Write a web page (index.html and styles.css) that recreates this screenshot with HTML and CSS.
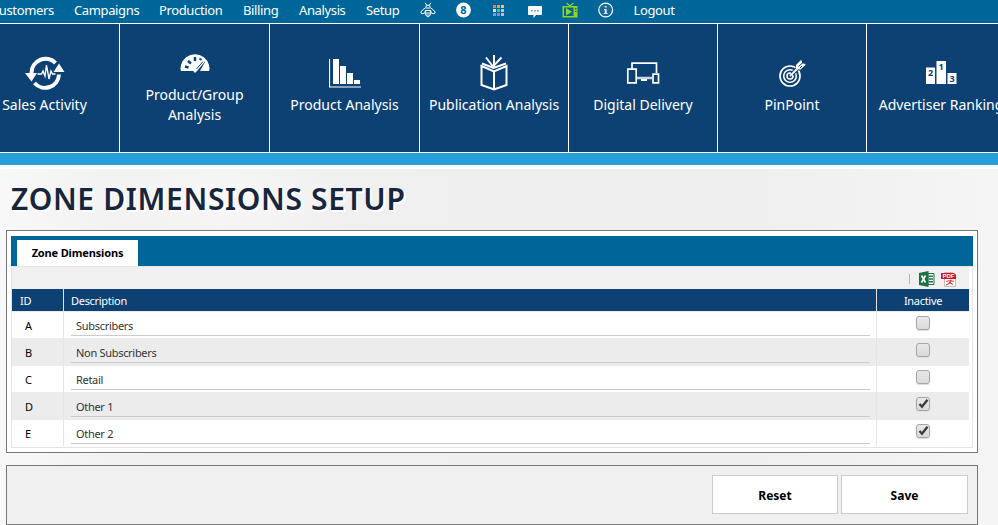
FILE: index.html
```html
<!DOCTYPE html>
<html lang="en">
<head>
<meta charset="utf-8">
<title>Zone Dimensions Setup</title>
<link rel="stylesheet" href="styles.css">
</head>
<body>
<nav class="menu">
  <a class="m-customers">Customers</a><a class="m-campaigns">Campaigns</a><a class="m-production">Production</a><a class="m-billing">Billing</a><a class="m-analysis">Analysis</a><a class="m-setup">Setup</a>
  <span class="micon"><svg width="16" height="16" viewBox="0 0 16 16" fill="none" stroke="#fff" stroke-width="1"><path d="M5 .8l1.800 2.400M11 .8L9.200 3.200M6 5V4q2-2 4 0v1M6 5.500Q3 7 .8 10q0 2 2 1.700 2 0 3.200-2.700M10 5.500q3 1.500 5.200 4.500 0 2-2 1.700-2 0-3.200-2.700M6 6h4M5.500 8.500h5M5 11h6M6 13h4M5.500 8q-1.500 5 2.500 7 4-2 2.500-7"/></svg></span>
  <span class="micon"><svg width="16" height="16" viewBox="0 0 16 16"><circle cx="7.500" cy="8" r="7.400" fill="#fff"/><text x="7.500" y="12" class="eight">8</text></svg></span>
  <span class="micon"><svg width="16" height="16" viewBox="0 0 16 16"><path fill="#f17b68" d="M2 3h3v3H2z"/><path fill="#f59a50" d="M6 3h3v3H6z"/><path fill="#f3c66a" d="M10 3h3v3h-3z"/><path fill="#c9e8df" d="M2 7h3v3H2z"/><path fill="#3ecb7b" d="M6 7h3v3H6z"/><path fill="#8ed7ef" d="M10 7h3v3h-3z"/><path fill="#6aa0dd" d="M2 11h3v3H2z"/><path fill="#b374cb" d="M6 11h3v3H6z"/><path fill="#e9a5d2" d="M10 11h3v3h-3z"/></svg></span>
  <span class="micon"><svg width="16" height="16" viewBox="0 0 16 16"><path fill="#fff" d="M2 4h12q1 0 1 1v7q0 1-1 1H9l-2.500 3v-3H2q-1 0-1-1V5q0-1 1-1z"/><path fill="#7bacc8" d="M4 8h2v1.500H4zM7 8h2v1.500H7zM10 8h2v1.500h-2z"/></svg></span>
  <span class="micon"><svg width="16" height="16" viewBox="0 0 16 16"><path d="M4.500 1L8 4l3.500-3" fill="none" stroke="#93d31b" stroke-width="1.200"/><path fill="#93d31b" fill-rule="evenodd" d="M.5 4h15v11.500H.5zM2 5.500v8.500h9.500V5.500zM13 6v1.500h1.500V6zm0 3v1h1.500V9z"/><path fill="#93d31b" d="M4 6l6 3.700-6 3.800z"/></svg></span>
  <span class="micon"><svg width="16" height="16" viewBox="0 0 16 16"><circle cx="7.700" cy="8" r="6.900" fill="#17699a" stroke="#fff" stroke-width="1.200"/><path d="M6.700 4h2v1.500h-2zM6 7h2.700v4h1v1H5.700v-1h1V8H6z" fill="#d9e8f0"/></svg></span>
  <a class="m-logout">Logout</a>
</nav>
<div class="ribbon">
  <a class="tile"><svg class="pic" width="40" height="34" viewBox="0 0 40 34"><g fill="none" stroke="#fff"><path stroke-width="4" d="M6.500 17A14 14 0 0 1 30.500 7M34 18.500A14 14 0 0 1 9.500 27"/><path stroke-width="1.400" d="M12.500 18h4l1.500-3 2 5 1.500-11 2.500 14 2-8 1.500 3h3"/></g><path fill="#fff" d="M0 17h12l-5.500 8.500zM28.500 16h11L34 7.500z"/></svg><span>Sales Activity</span></a>
  <a class="tile tile-tall"><svg class="pic" width="30" height="20" viewBox="0 0 30 20"><path fill="#fff" d="M1 17Q0 15 1 11A14.500 14.500 0 0 1 29 11q1 4 0 6H20l5-9-1.500-1-8 8-2 2z"/><path stroke="#0d4174" stroke-width="2.500" d="M5 12.500l3.500 1M8 7l3 2.500M15 3v4M21 4.500l-1 1.500"/><path stroke="#fff" stroke-width="3" stroke-linecap="round" d="M15 17l8-9.500"/><path stroke="#0d4174" stroke-width="1" d="M16.500 15L23 7.500"/></svg><span>Product/Group<br>Analysis</span></a>
  <a class="tile"><svg class="pic" width="32" height="30" viewBox="0 0 32 30"><path d="M.5 1v28h31.500" fill="none" stroke="#fff" stroke-width="1.200"/><path fill="#fff" d="M4 1h6v25H4zM11 8h6v18h-6zM18 15h6v11h-6zM25 22h6v4h-6z"/></svg><span>Product Analysis</span></a>
  <a class="tile narrow"><svg class="pic" width="28" height="36" viewBox="0 0 28 36" fill="none" stroke="#fff" stroke-width="2"><path d="M1.500 11L14 16.500 26.500 11v19L14 34.500 1.500 30zM14 16.500v18M2 8.500l11.500 4.500L26 8.500M6 2.500l7 9 8.500-9M14 0v12"/></svg><span>Publication Analysis</span></a>
  <a class="tile narrow"><svg class="pic" width="34" height="24" viewBox="0 0 34 24" fill="none" stroke="#fff"><path stroke-width="1.700" d="M6 8V2.200h24.500V12M1.800 8.200h8.400v13.600H1.800zM27 13.200h5.500v8.600H27z"/><path stroke="#c9d7e4" stroke-width="2.500" d="M11 17h15"/><path stroke-width="2" d="M15 19h6"/></svg><span>Digital Delivery</span></a>
  <a class="tile narrow"><svg class="pic" width="28" height="28" viewBox="0 0 28 28" fill="none" stroke="#fff"><circle cx="12" cy="17" r="10" stroke-width="1.700"/><circle cx="12" cy="17" r="6.300" stroke-width="1.600"/><circle cx="12" cy="17" r="3" stroke-width="1.500"/><path stroke="#0d4174" stroke-width="4" d="M14 15l7-7"/><path stroke-width="1.800" d="M12 17l9-9"/><path d="M18.500 9.500V6L23 1.500l.8 3.200 3.500.8-4.800 4.500z" fill="#fff"/><path stroke="#0d4174" d="M20.500 7.500l4.500-4M22 9l2-2"/></svg><span>PinPoint</span></a>
  <a class="tile narrow last"><svg class="pic" width="31" height="24" viewBox="0 0 31 24"><path fill="#fff" d="M0 6.500h9V23H0zM10.500 0H20v23h-9.500zM21.500 12h9v11h-9z"/><g class="ranks"><text x="4.500" y="15">2</text><text x="15.200" y="9">1</text><text x="26" y="21">3</text></g></svg><span>Advertiser Ranking</span></a>
</div>
<div class="band"></div>
<main>
  <h1>ZONE DIMENSIONS SETUP</h1>
  <section class="panel">
    <div class="tabs"><div class="tab">Zone Dimensions</div></div>
    <div class="grid">
      <div class="tools"><i class="sep"></i>
        <svg width="16" height="16" viewBox="0 0 16 16"><path fill="#fff" stroke="#217346" d="M9 2.500h6v11H9z"/><path stroke="#217346" stroke-width="1.500" d="M10 5.200h4M10 8h4M10 10.800h4"/><path fill="#1d7044" d="M0 2l9.500-2v16L0 14z"/><path stroke="#fff" stroke-width="1.600" d="M2.500 4.500l4 7M6.500 4.500l-4 7"/></svg>
        <svg width="16" height="16" viewBox="0 0 16 16"><path fill="#fff" stroke="#bbb" d="M3.500 1.500h8l3 3v11h-11z"/><path fill="#c4161c" d="M0 2h13l2 2v4H0z"/><text x="7.500" y="7.300" class="pdf">PDF</text><path fill="none" stroke="#d0454a" stroke-width="1.200" d="M5 10.500q4-1.500 8 0M10 8.500q0 4-5 5.500M8 11l4 2.500"/></svg>
      </div>
      <table>
        <thead><tr><th class="c-id">ID</th><th class="c-desc">Description</th><th class="c-in">Inactive</th></tr></thead>
        <tbody>
          <tr><td class="c-id">A</td><td class="c-desc"><div class="field">Subscribers</div></td><td class="c-in"><span class="box"></span></td></tr>
          <tr><td class="c-id">B</td><td class="c-desc"><div class="field">Non Subscribers</div></td><td class="c-in"><span class="box"></span></td></tr>
          <tr><td class="c-id">C</td><td class="c-desc"><div class="field">Retail</div></td><td class="c-in"><span class="box"></span></td></tr>
          <tr><td class="c-id">D</td><td class="c-desc"><div class="field">Other 1</div></td><td class="c-in"><span class="box"><svg width="11" height="11" viewBox="0 0 11 11"><path d="M1.500 6l2.500 2.700L9.500 1.800" fill="none" stroke="#3c3c3c" stroke-width="2.400"/></svg></span></td></tr>
          <tr><td class="c-id">E</td><td class="c-desc"><div class="field">Other 2</div></td><td class="c-in"><span class="box"><svg width="11" height="11" viewBox="0 0 11 11"><path d="M1.500 6l2.500 2.700L9.500 1.800" fill="none" stroke="#3c3c3c" stroke-width="2.400"/></svg></span></td></tr>
        </tbody>
      </table>
    </div>
  </section>
  <section class="actions"><button class="reset">Reset</button><button class="save">Save</button></section>
</main>
</body>
</html>
```

FILE: styles.css
```css
* { box-sizing: border-box; }
body { margin: 0; width: 998px; height: 525px; overflow: hidden; font-family: "Noto Sans", sans-serif; background: #fff; }
.menu { display: flex; height: 24px; background: #006699; border-bottom: 1px solid #fff; color: #fff; font-size: 13px; line-height: 21px; letter-spacing: -.37px; white-space: nowrap; }
.menu a { flex: none; }
.m-customers { width: 83px; margin-left: -9px; }
.m-campaigns { width: 85px; }
.m-production { width: 84px; }
.m-billing { width: 56px; }
.m-analysis { width: 67px; }
.m-setup { width: 54px; }
.micon { flex: none; width: 35.600px; padding-top: 2px; line-height: 0; }
.eight { font: bold 11px "Noto Sans", sans-serif; fill: #006699; text-anchor: middle; letter-spacing: 0; }
.ribbon { display: flex; width: 1046px; margin-left: -30px; height: 129px; background: #0d4174; border-bottom: 1px solid #fff; }
.tile { flex: none; width: 150px; border-right: 1px solid #fff; display: flex; flex-direction: column; align-items: center; color: #fff; font-size: 14px; line-height: 20px; text-align: center; white-space: nowrap; }
.tile.narrow { width: 149px; }
.tile .pic { height: 38px; margin-top: 30px; margin-bottom: 3px; }
.tile-tall .pic { height: 20px; margin-bottom: 11px; }
.ranks { font: bold 9px "Noto Sans", sans-serif; fill: #0d4174; text-anchor: middle; }
.band { height: 16px; background: #269fdb; border-bottom: 4px solid #fff; }
main { height: 356px; padding: 0 20px 0 6px; background: radial-gradient(ellipse at 22% 8%, #f8f8f8 0, transparent 12%), linear-gradient(90deg, #f8f8f8 0, #f0f0f0 15%, #efefef 75%, #f5f5f5 100%); }
h1 { margin: 0 0 0 5px; height: 61px; padding-top: 8px; color: #17263c; font: 600 30px/44px "Noto Sans", sans-serif; letter-spacing: .65px; white-space: nowrap; text-shadow: 2px 2px 0 #fff; }
.panel { height: 223px; border: 1px solid #777; background: #fff; padding: 5px 4px; }
.tabs { height: 30px; background: #006699; padding: 4px 0 0 6px; }
.tab { width: 121px; height: 26px; background: #fff; color: #000; text-align: center; font-size: 11px; font-weight: bold; line-height: 26px; letter-spacing: -.15px; white-space: nowrap; }
.grid { height: 182px; border: 1px solid #e5e5e5; padding-right: 3px; }
.tools { height: 22px; background: #f0f0f0; display: flex; justify-content: flex-end; align-items: center; gap: 6px; padding: 1px 12px 0 0; }
.tile-tall .pic { margin-top: 30px; }
.tile-tall .pic { height: 20px; }
.sep { width: 1px; height: 10px; background: #e7a584; margin-right: 3px; }
.pdf { font: bold 6px "Liberation Sans", sans-serif; fill: #fff; text-anchor: middle; }
table { width: 957px; border-collapse: separate; border-spacing: 0; table-layout: fixed; font-size: 11px; letter-spacing: -.3px; }
th { height: 22px; padding: 1px 0 0 7px; background: #0d4174; color: #fff; font-weight: normal; text-align: left; line-height: 21px; border-right: 1px solid #e5e5e5; }
td { height: 27px; padding: 0; border-right: 1px solid #e5e5e5; border-top: 1px solid #ebebeb; color: #000; }
tbody tr:nth-child(even) { background: #ececec; }
.c-id { width: 52px; }
th.c-id { padding-left: 8px; }
td.c-id { padding: 0 0 0 13px; }
.c-desc { width: 813px; }
td.c-desc { padding: 0 6px 0 7px; }
.field { height: 21px; padding: 1px 0 0 5px; line-height: 20px; color: #333; border-bottom: 1px solid #ccc; }
.c-in { width: 92px; border-right: 0; }
th.c-in { text-align: center; padding-left: 0; border-right: 0; }
td.c-in { text-align: center; line-height: 0; border-right: 0; }
.box { display: inline-block; width: 14px; height: 14px; margin-bottom: 5px; border: 1px solid #a5a5a5; border-radius: 3px; background: linear-gradient(#e8e8e8, #dadada); box-shadow: 0 1px 1px #ddd; vertical-align: middle; }
.actions { margin-top: 12px; height: 60px; border: 1px solid #777; background: #f0f0f0; display: flex; justify-content: flex-end; gap: 3px; padding: 9px 9px 0 0; }
button { height: 39px; padding: 1px 0 0; border: 1px solid #ccc; background: #fff; color: #000; font: bold 12px "Noto Sans", sans-serif; }
.reset { width: 126px; }
.save { width: 127px; }
```
